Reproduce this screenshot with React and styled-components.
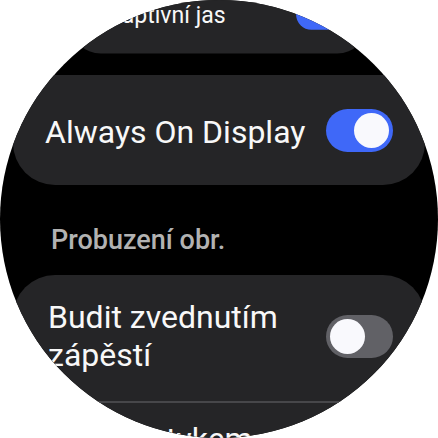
import React from "react";
import styled, { createGlobalStyle } from "styled-components";

const GlobalStyle = createGlobalStyle`
  body {
    margin: 0;
    background: #ffffff;
    font-family: Roboto, "Noto Sans", Arial, sans-serif;
  }
`;

const Watch = styled.div`
  width: 438px;
  height: 438px;
  border-radius: 50%;
  overflow: hidden;
  background: #000;
`;

// the list is scrolled, so it starts above the screen
const List = styled.div`
  display: flex;
  flex-direction: column;
  padding: 0 13px;
  margin-top: -41px;
`;

// items near the rim of the round screen are drawn smaller
const Card = styled.div`
  background: #252527;
  border-radius: 42px;
  transform: scale(${(p) => p.$scale || 1});
  transform-origin: center;
  margin-top: ${(p) => p.$gap || 0}px;
`;

const Row = styled.div`
  display: flex;
  align-items: center;
  justify-content: space-between;
  gap: 16px;
  height: ${(p) => p.$height}px;
  padding: 0 32px ${(p) => p.$bottom || 0}px ${(p) => p.$left || 32}px;
  box-sizing: border-box;
`;

const Label = styled.div`
  color: #f8f8f8;
  font-size: 32px;
  line-height: 38px;
  margin-top: ${(p) => p.$dy || 0}px;
`;

const Divider = styled.div`
  height: 2px;
  background: #47474a;
  margin: 0 34px;
`;

const Header = styled.div`
  color: #b2b2b2;
  font-size: 27px;
  line-height: 27px;
  font-weight: 500;
  padding: 42px 0 21px 38px;
`;

const Track = styled.div`
  flex: none;
  width: 67px;
  height: 43px;
  border-radius: 22px;
  background: ${(p) => (p.$on ? "#3f68f8" : "#616166")};
  display: flex;
  align-items: center;
  justify-content: ${(p) => (p.$on ? "flex-end" : "flex-start")};
  padding: 0 4px;
  box-sizing: border-box;
`;

const Knob = styled.div`
  width: 35px;
  height: 35px;
  border-radius: 50%;
  background: #f9f9fd;
`;

const Toggle = ({ on }) => (
  <Track $on={on}>
    <Knob />
  </Track>
);

export default function App() {
  return (
    <>
      <GlobalStyle />
      <Watch>
        <List>
          <Card $scale={0.72}>
            <Row $height={110}>
              <Label $dy={4}>Adaptivní jas</Label>
              <Toggle on />
            </Row>
          </Card>
          <Card $gap={6}>
            <Row $height={110}>
              <Label $dy={4}>Always On Display</Label>
              <Toggle on />
            </Row>
          </Card>
          <Header>Probuzení obr.</Header>
          <Card>
            <Row $height={126} $left={35} $bottom={4}>
              <Label>
                Budit zvednutím
                <br />
                zápěstí
              </Label>
              <Toggle />
            </Row>
            <Divider />
            <Row $height={72} $left={35}>
              <Label>Budit dotykem</Label>
              <Toggle />
            </Row>
          </Card>
        </List>
      </Watch>
    </>
  );
}
